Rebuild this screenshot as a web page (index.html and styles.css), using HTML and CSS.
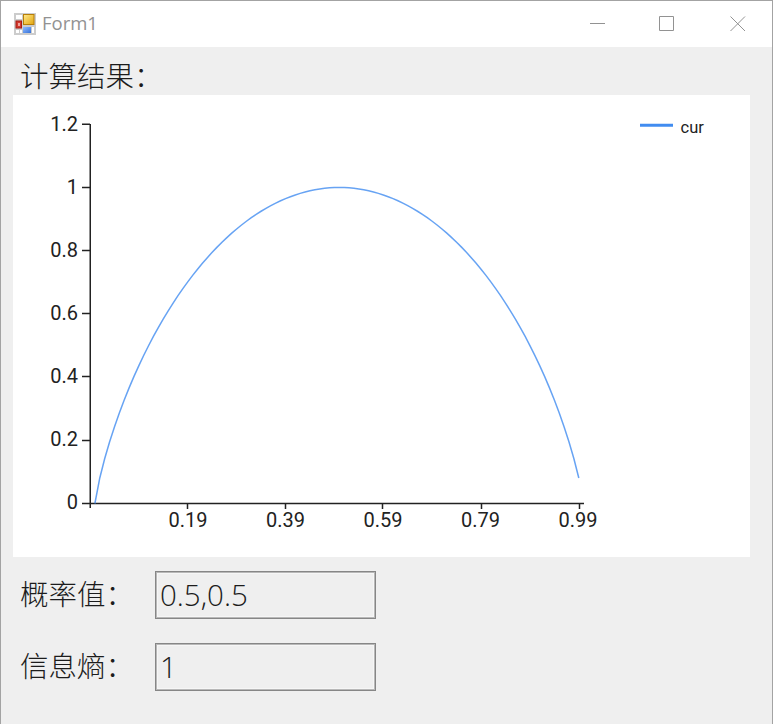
FILE: index.html
```html
<!DOCTYPE html>
<html lang="zh-CN">
<head>
<meta charset="utf-8">
<title>Form1</title>
<link rel="stylesheet" href="styles.css">
</head>
<body>
<div class="window">
  <header class="titlebar">
    <svg class="app-icon" width="22" height="22" viewBox="0 0 22 22">
      <defs>
        <linearGradient id="gold" x2="1" y2="1"><stop offset="0" stop-color="#ffe98c"/><stop offset="1" stop-color="#e3a50c"/></linearGradient>
        <linearGradient id="blue" x2="1" y2="1"><stop offset="0" stop-color="#8fbcff"/><stop offset="1" stop-color="#3570d8"/></linearGradient>
      </defs>
      <rect width="22" height="22" fill="#ccc"/>
      <path d="M2 2h6v4H2zM2 17h3v3H2zM6 17h2v3H6zM18 14h2v6h-2z" fill="#fff"/>
      <rect x="2" y="8" width="5.500" height="7" fill="#d3382c" stroke="#a51c16"/>
      <rect x="4" y="10" width="2" height="3" fill="#f2a19a"/>
      <rect x="9.500" y="1.500" width="10.500" height="10" fill="url(#gold)" stroke="#b77e08"/>
      <rect x="9" y="14" width="8" height="6" fill="url(#blue)"/>
    </svg>
    <h1 class="title">Form1</h1>
    <div class="controls">
      <svg width="16" height="16"><path d="M0 7.500h15"/></svg>
      <svg width="16" height="16"><path d="M.5.500h14v14H.5z"/></svg>
      <svg width="16" height="16"><path d="M.5.500l14.500 14.500M15 .5L.5 15"/></svg>
    </div>
  </header>
  <main class="client">
    <div class="heading">计算结果：</div>
    <svg class="chart" width="736.5" height="462" viewBox="13 95 736.5 462">
      <path class="axis" d="M90.250 124V508M82 503.500H584"/>
      <path class="axis" d="M82 124.250h8M82 187.500h8M82 250.500h8M82 313.500h8M82 376.500h8M82 440.500h8M187.500 504v5M285.500 504v5M382.500 504v5M481.500 504v5M579.500 504v5"/>
      <g class="y-labels">
        <text x="78" y="131.300">1.2</text>
        <text x="78" y="194.300">1</text>
        <text x="78" y="257.300">0.8</text>
        <text x="78" y="320.300">0.6</text>
        <text x="78" y="383.300">0.4</text>
        <text x="78" y="446.300">0.2</text>
        <text x="78" y="509.300">0</text>
      </g>
      <g class="x-labels">
        <text x="188" y="527.300">0.19</text>
        <text x="285.500" y="527.300">0.39</text>
        <text x="383" y="527.300">0.59</text>
        <text x="480.500" y="527.300">0.79</text>
        <text x="578" y="527.300">0.99</text>
      </g>
      <polyline class="curve" id="curve"/>
      <path class="legend-line" d="M640 125.200h33"/>
      <text class="legend" x="680.500" y="132.500">cur</text>
    </svg>
    <div class="fields">
      <label for="prob">概率值：</label><input id="prob" value="0.5,0.5" readonly>
      <label for="entropy">信息熵：</label><input id="entropy" value="1" readonly>
    </div>
  </main>
</div>
<script src="script.js"></script>
</body>
</html>
```
FILE: styles.css
```css
* { box-sizing: border-box; }
body { margin: 0; overflow: hidden; }
.window {
  width: 773px;
  height: 724px;
  background: #efefef;
  border: solid #a3a3a3;
  border-width: 1px 1px 0;
  font-family: "Open Sans", "Noto Sans CJK SC", sans-serif;
  color: #1c1c1c;
}
.titlebar {
  display: flex;
  align-items: center;
  height: 46px;
  padding: 0 26px 0 13px;
  background: #fff;
}
.title {
  margin: 0 0 0 6px;
  font-size: 18.5px;
  font-weight: 400;
  line-height: 44px;
  height: 46px;
  color: #929292;
}
.controls { display: flex; gap: 54px; margin-left: auto; }
.controls svg { fill: none; stroke: #929292; stroke-width: 1; }
.controls svg:nth-child(2) { margin: 0 1px 0 -1px; }
.client { padding-left: 12px; }
.heading {
  height: 48px;
  padding-left: 7px;
  line-height: 55px;
}
.heading, .fields label {
  font-family: "Noto Sans CJK SC", sans-serif;
  font-size: 28.5px;
  font-weight: 300;
  white-space: nowrap;
}
.chart {
  display: block;
  background: #fff;
  font-family: Roboto, sans-serif;
  font-size: 20px;
}
.chart text { fill: #222; }
.axis { fill: none; stroke: #222; stroke-width: 1.5; }
.y-labels { text-anchor: end; }
.x-labels { text-anchor: middle; }
.curve { fill: none; stroke: #418cf0; stroke-width: 1.5; opacity: .8; }
.legend-line { stroke: #418cf0; stroke-width: 3; }
.chart .legend { font-size: 16.5px; }
.fields {
  display: grid;
  grid-template-columns: 135px 221px;
  grid-auto-rows: 48px;
  row-gap: 24px;
  padding: 14px 0 0 7px;
}
.fields label { line-height: 44px; }
.fields input {
  width: 221px;
  height: 48px;
  padding: 0 4px 1px;
  border: 1px solid #868686;
  border-radius: 0;
  outline: 0;
  box-shadow: inset 0 0 0 1px #b8b8b8, inset 0 0 0 2px #f6f6f6;
  background: #efefef;
  font: 300 29.5px "Open Sans", sans-serif;
  color: #1c1c1c;
}
```
FILE: script.js
```js
// Binary entropy H(p) for p = 0 … 0.99
const points = [];
for (let i = 0; i < 100; i++) {
  const p = i / 100;
  const h = p === 0 ? 0 : -p * Math.log2(p) - (1 - p) * Math.log2(1 - p);
  points.push((90 + 4.888 * (i + 1)).toFixed(2) + "," + (503.5 - 316 * h).toFixed(2));
}
document.getElementById("curve").setAttribute("points", points.join(" "));
```
